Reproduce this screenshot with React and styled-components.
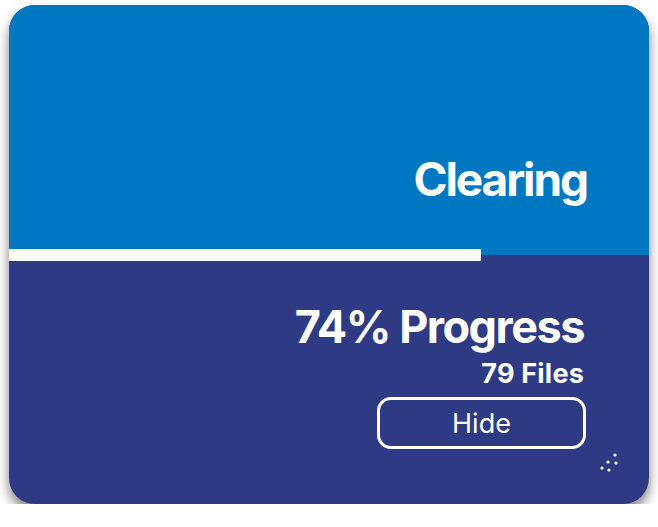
import React from 'react'
import styled, { createGlobalStyle } from 'styled-components'

const GlobalStyle = createGlobalStyle`
    html, body {
        margin: 0;
        padding: 0;
        background: #ffffff;
    }
    body {
        font-family: Inter, "Noto Sans", sans-serif;
    }
`

function ResizeGrip() {
    return (
        <GripWrapper>
            <svg width="20" height="20" viewBox="0 0 20 20">
                <circle cx="16" cy="2" r="1.6" fill="#fff" />
                <circle cx="9" cy="9" r="1.6" fill="#fff" />
                <circle cx="17" cy="10" r="1.6" fill="#fff" />
                <circle cx="3" cy="15" r="1.6" fill="#fff" />
                <circle cx="10" cy="17" r="1.6" fill="#fff" />
            </svg>
        </GripWrapper>
    )
}

function App() {
    const progress = 74
    return (
        <Page>
            <GlobalStyle />
            <Card>
                <TopSection>
                    <Title>Clearing</Title>
                </TopSection>
                <Track>
                    <Fill style={{ width: `${progress}%` }} />
                </Track>
                <BottomSection>
                    <ProgressText>{progress}% Progress</ProgressText>
                    <FilesText>79 Files</FilesText>
                    <HideButton>Hide</HideButton>
                    <ResizeGrip />
                </BottomSection>
            </Card>
        </Page>
    )
}

export default App

const Page = styled.div`
    padding: 5px 9px 0 9px;
`
const Card = styled.div`
    width: 640px;
    height: 499px;
    border-radius: 26px;
    overflow: hidden;
    display: flex;
    flex-direction: column;
    box-shadow: 0 7px 12px rgba(0, 0, 0, 0.5);
    background: #2e3a83;
`
const TopSection = styled.div`
    height: 250px;
    flex-shrink: 0;
    background: #0078c1;
    display: flex;
    flex-direction: column;
    justify-content: flex-end;
    align-items: flex-end;
    padding: 0 62px 53px 0;
    box-sizing: border-box;
`
const Title = styled.div`
    color: #fff;
    font-size: 46px;
    font-weight: 700;
    line-height: 1;
    letter-spacing: -2.1px;
`
const Track = styled.div`
    height: 12px;
    margin: -6px 2px -6px 0;
    position: relative;
    z-index: 1;
`
const Fill = styled.div`
    height: 100%;
    background: #fff;
`
const BottomSection = styled.div`
    flex: 1;
    display: flex;
    flex-direction: column;
    align-items: flex-end;
    padding: 49px 64px 0 0;
    color: #fff;
    position: relative;
`
const ProgressText = styled.div`
    font-size: 45px;
    font-weight: 700;
    line-height: 1;
    letter-spacing: -1.5px;
    margin-right: 1px;
`
const FilesText = styled.div`
    font-size: 27px;
    font-weight: 700;
    line-height: 1;
    margin-top: 11px;
    letter-spacing: 0.2px;
    margin-right: 1px;
`
const HideButton = styled.button`
    margin-top: 10px;
    margin-right: -1px;
    width: 209px;
    height: 52px;
    box-sizing: border-box;
    border: 3px solid #fff;
    border-radius: 14px;
    background: transparent;
    color: #fff;
    font-family: Inter, "Noto Sans", sans-serif;
    font-size: 27px;
    font-weight: 400;
    cursor: pointer;
`
const GripWrapper = styled.div`
    position: absolute;
    right: 30px;
    bottom: 31px;
    width: 20px;
    height: 20px;
    svg {
        display: block;
    }
`
